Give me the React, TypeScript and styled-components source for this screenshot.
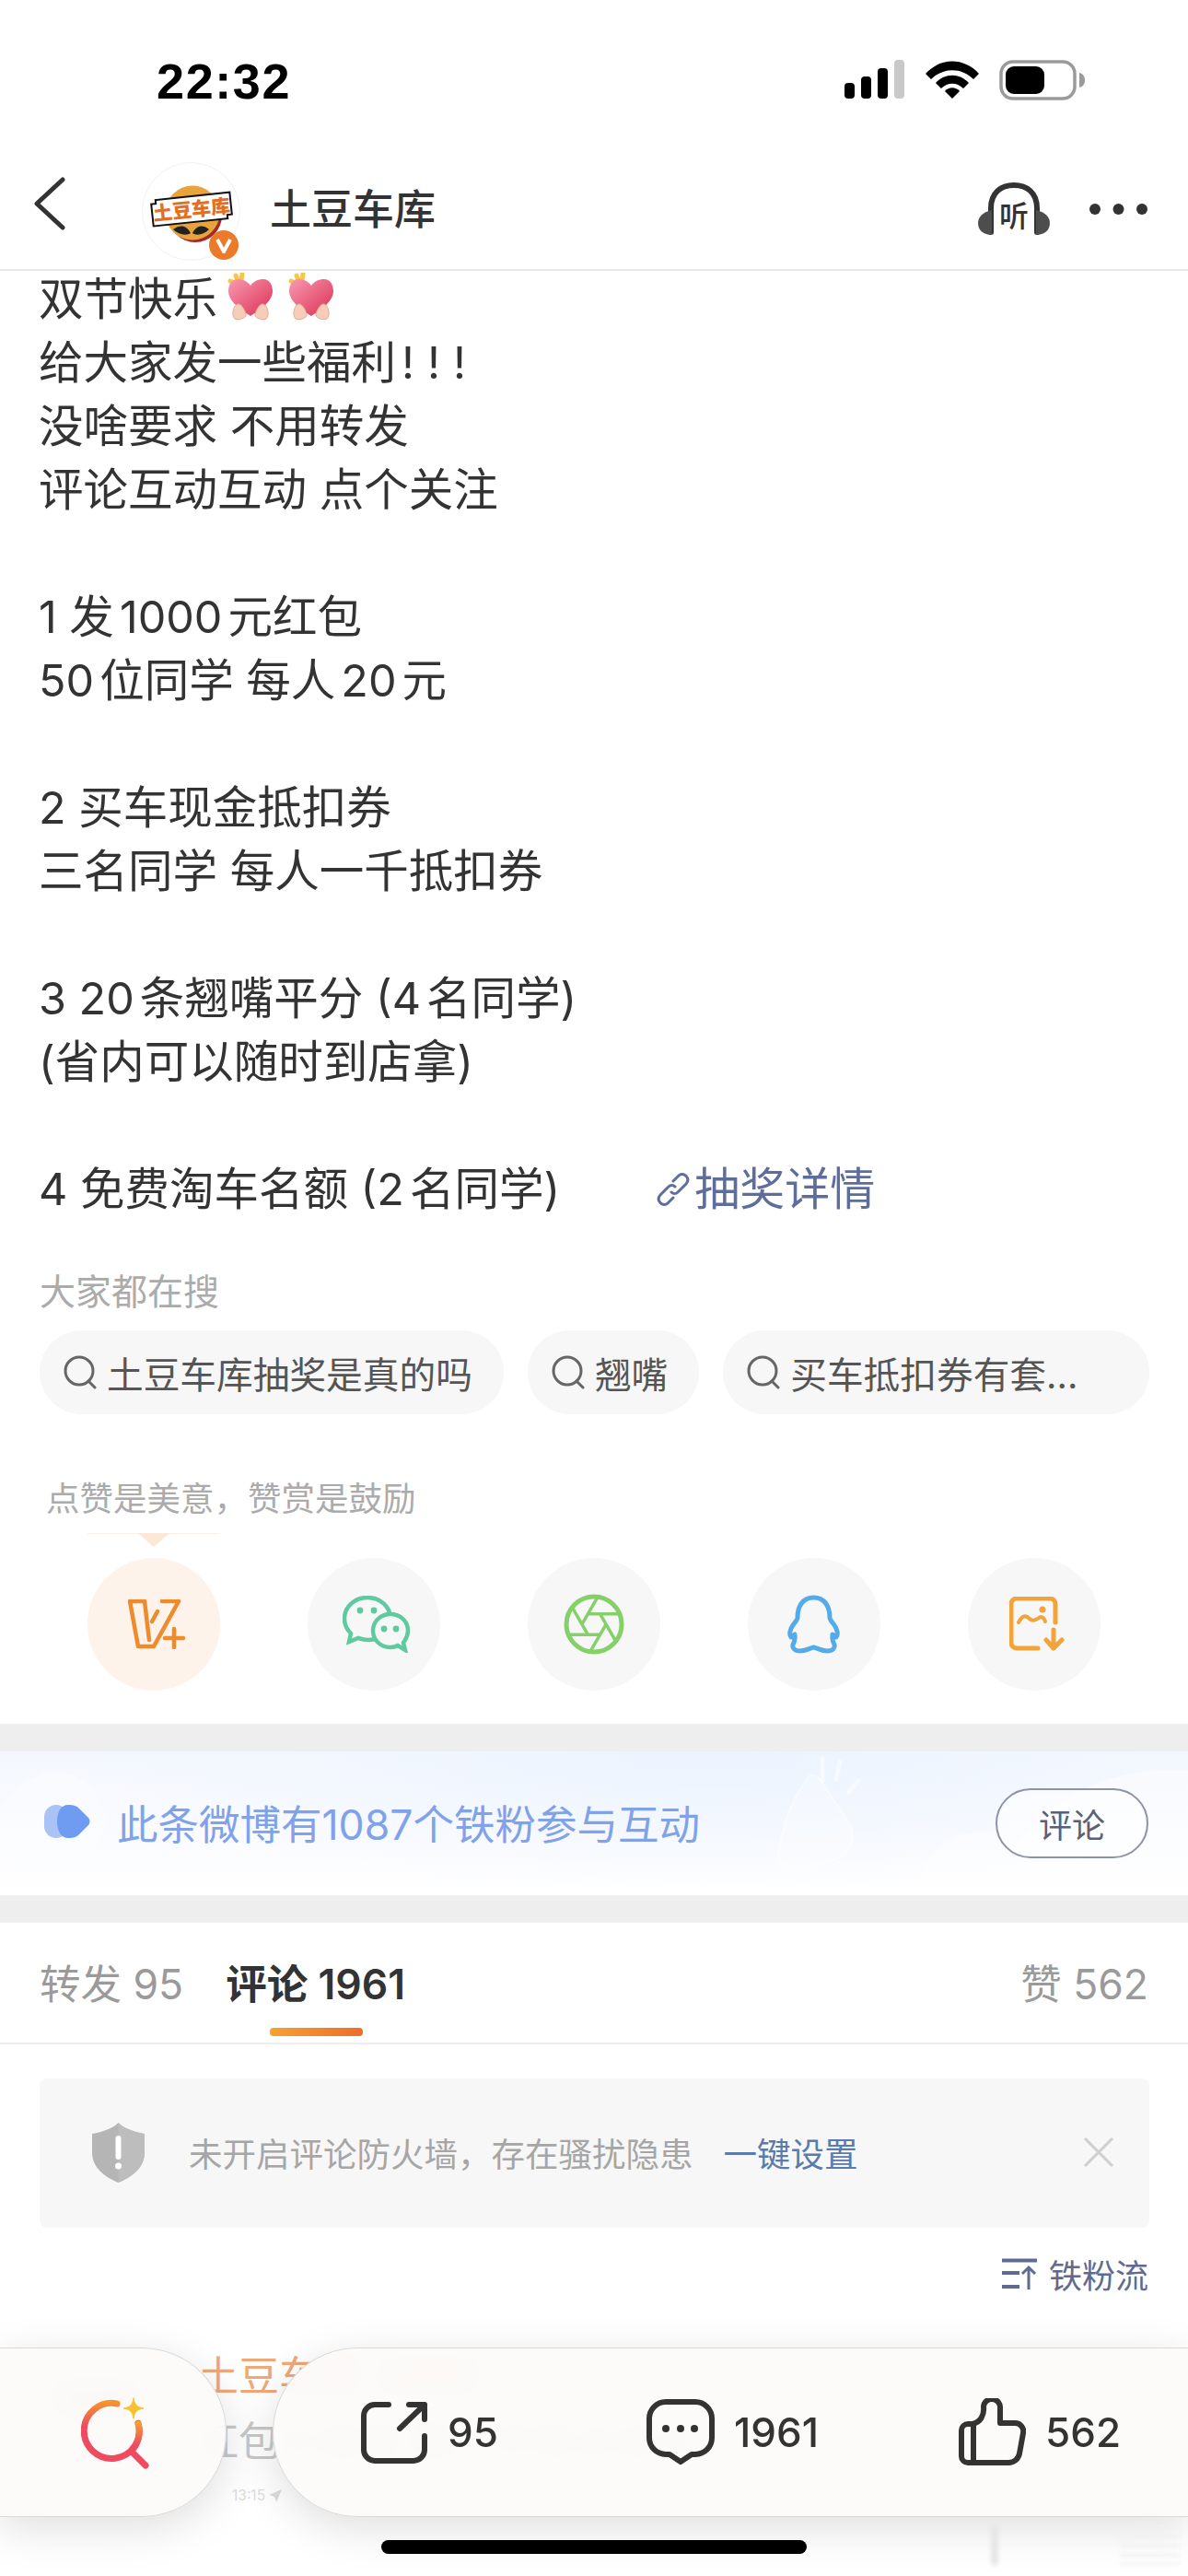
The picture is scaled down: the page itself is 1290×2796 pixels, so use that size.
import React from "react";
import styled, { createGlobalStyle } from "styled-components";

const Global = createGlobalStyle`
  html, body { margin: 0; padding: 0; background: #fff; }
  * { box-sizing: border-box; }
  body { font-family: Inter, "Noto Sans CJK SC", sans-serif; color: #333; text-autospace: normal; }
`;

const Page = styled.div`
  position: relative;
  width: 1290px;
  height: 2796px;
  overflow: hidden;
  background: #fff;
`;
const Header = styled.header`
  position: relative;
  z-index: 2;
  height: 294px;
  border-bottom: 2px solid #e9e9e9;
  background: #fff;
`;
const StatusBar = styled.div`
  height: 150px;
  display: flex;
  align-items: flex-start;
  justify-content: space-between;
  padding: 65px 112px 0 170px;
`;
const Time = styled.div`
  font: 700 54px/46px "Liberation Sans", sans-serif;
  letter-spacing: 1.6px;
  color: #000;
`;
const StatusIcons = styled.div`
  display: flex;
  align-items: flex-start;
  gap: 22px;
`;
const Nav = styled.nav`
  height: 142px;
  display: flex;
  align-items: center;
  padding: 0 44px 0 36px;
`;
const Avatar = styled.div`
  position: relative;
  width: 107px;
  height: 107px;
  margin-left: 82px;
  margin-top: 16px;
  border-radius: 50%;
  border: 1px solid #f1f1f1;
`;
const AvatarBadge = styled.div`
  position: absolute;
  right: 1px;
  bottom: 0;
  width: 32px;
  height: 32px;
  border-radius: 50%;
  background: #ec7a2b;
  color: #fff;
  display: flex;
  align-items: center;
  justify-content: center;
`;
const NavTitle = styled.div`
  margin-left: 32px;
  margin-top: 14px;
  font-size: 45px;
  line-height: 60px;
  font-weight: 500;
  color: #333;
`;
const NavRight = styled.div`
  margin-left: auto;
  margin-top: 11px;
  display: flex;
  align-items: center;
  gap: 43px;
`;

const Post = styled.section`
  margin-top: -4px;
  padding: 0 42px;
`;
const Line = styled.div`
  height: 69px;
  font-size: 48.5px;
  line-height: 69px;
  color: #333;
  white-space: pre;
  display: flex;
  align-items: center;
`;
const Bangs = styled.span`
  letter-spacing: 14px;
  margin-left: 6px;
`;
const Emoji = styled.svg<{ $gap: number }>`
  margin-left: ${(p) => p.$gap}px;
  margin-top: -6px;
`;
const DetailLink = styled.span`
  margin-left: 104px;
  display: inline-flex;
  align-items: center;
  color: #5d6d9c;
  font-size: 49px;
  gap: 4px;
`;

const SearchLabel = styled.div`
  margin: 50px 43px 0;
  height: 54px;
  font-size: 39px;
  line-height: 54px;
  color: #ababab;
`;
const Chips = styled.div`
  margin: 15px 42px 0 43px;
  display: flex;
  gap: 26px;
`;
const Chip = styled.div<{ $grow?: boolean }>`
  height: 91px;
  border-radius: 46px;
  background: #f7f7f7;
  display: flex;
  align-items: center;
  gap: 10px;
  padding: 0 34px 0 25px;
  font-size: 39.7px;
  color: #555;
  white-space: nowrap;
  flex: ${(p) => (p.$grow ? 1 : "none")};
`;

const RewardText = styled.div`
  margin: 67px 0 0 50px;
  height: 50px;
  font-size: 36.5px;
  line-height: 50px;
  color: #ababab;
`;
const TipMark = styled.div`
  position: relative;
  margin: 12px 0 0 95px;
  width: 144px;
  height: 15px;
  border-top: 1px solid #fbf0e6;
  &::after {
    content: "";
    position: absolute;
    left: 55px;
    top: -1px;
    border-left: 17px solid transparent;
    border-right: 17px solid transparent;
    border-top: 15px solid #fce8d6;
  }
`;
const ShareRow = styled.div`
  margin-top: 12px;
  padding: 0 95px 36px;
  display: flex;
  justify-content: space-between;
`;
const ShareCircle = styled.div<{ $active?: boolean; $nudge?: number }>`
  width: 144px;
  height: 144px;
  border-radius: 50%;
  padding-left: ${(p) => p.$nudge ?? 0}px;
  background: ${(p) => (p.$active ? "#fef3ea" : "#f7f7f7")};
  display: flex;
  align-items: center;
  justify-content: center;
`;
const Band = styled.div`
  height: 30px;
  background: #eeeeee;
`;
const Banner = styled.section`
  position: relative;
  height: 156px;
  overflow: hidden;
  display: flex;
  align-items: center;
  padding: 0 43px 4px 48px;
  background: radial-gradient(ellipse 700px 150px at 60% 0%, #ecf3fe 0%, rgba(240, 246, 254, 0.5) 60%, rgba(255, 255, 255, 0) 100%),
    linear-gradient(180deg, #f4f8fe 0%, #fbfcff 70%, #ffffff 100%);
`;
const BannerArt = styled.svg`
  position: absolute;
  left: 0;
  top: 0;
`;
const BannerIconWrap = styled.div`
  position: relative;
  display: flex;
`;
const BannerText = styled.div`
  position: relative;
  margin-left: 29px;
  font-size: 44.5px;
  color: #7fa2ea;
  text-autospace: no-autospace;
`;
const BannerButton = styled.div`
  position: relative;
  margin-left: auto;
  margin-top: 4px;
  width: 166px;
  height: 76px;
  border-radius: 38px;
  border: 2px solid #8d93a8;
  background: rgba(255, 255, 255, 0.5);
  display: flex;
  align-items: center;
  justify-content: center;
  font-size: 36px;
  color: #5a6075;
`;
const Tabs = styled.div`
  position: relative;
  height: 132px;
  padding: 0 43px 0;
  border-bottom: 2px solid #ececec;
  display: flex;
  align-items: flex-start;
  font-size: 44.5px;
  line-height: 60px;
  color: #9a9a9a;
`;
const Tab = styled.div<{ $active?: boolean; $right?: boolean }>`
  margin-top: 37px;
  margin-left: ${(p) => (p.$right ? "auto" : p.$active ? "46px" : "0")};
  font-weight: ${(p) => (p.$active ? 600 : 400)};
  color: ${(p) => (p.$active ? "#333" : "#9a9a9a")};
  position: relative;
`;
const TabMark = styled.div`
  position: absolute;
  left: 48px;
  top: 77px;
  width: 101px;
  height: 9px;
  border-radius: 4px;
  background: linear-gradient(90deg, #f5a233, #ed6d2a);
`;
const Notice = styled.div`
  margin: 37px 42px 0 43px;
  height: 162px;
  background: #f7f7f7;
  border-radius: 8px;
  display: flex;
  align-items: center;
  padding: 0 38px 2px 57px;
  font-size: 36.5px;
  color: #a6a6a6;
`;
const NoticeText = styled.div`
  margin-left: 48px;
`;
const NoticeLink = styled.div`
  margin-left: 33px;
  color: #5b7cab;
`;
const NoticeClose = styled.svg`
  margin-left: auto;
`;
const SortRow = styled.div`
  margin: 25px 43px 0;
  height: 50px;
  display: flex;
  align-items: center;
  justify-content: flex-end;
  gap: 13px;
  font-size: 36px;
  color: #5f6b90;
`;
const Comment = styled.div`
  margin: 56px 0 0 57px;
  display: flex;
  gap: 63px;
`;
const CommentAvatar = styled.div`
  width: 95px;
  height: 36px;
  margin-top: 36px;
  background: #efe2d4;
  flex: none;
`;
const CommentMain = styled.div`
  min-width: 0;
`;
const CommentName = styled.div`
  font-size: 44px;
  line-height: 60px;
  color: #efa878;
  display: flex;
  align-items: center;
  gap: 20px;
`;
const Crown = styled.div`
  width: 108px;
  height: 36px;
  background: #f6e3c8;
  border-radius: 4px;
`;
const CommentBody = styled.div`
  margin-top: 11px;
  font-size: 44px;
  line-height: 60px;
  color: #c8c8c8;
  white-space: nowrap;
`;
const CommentTime = styled.div`
  margin: 19px 0 0 37px;
  font-size: 15.5px;
  color: #dcdcdc;
  display: flex;
  align-items: center;
  gap: 4px;
`;
const BottomBar = styled.div`
  position: absolute;
  left: 0;
  right: 0;
  bottom: 64px;
  height: 184px;
  display: flex;
`;
const Pill = styled.div<{ $side: "left" | "right" }>`
  height: 184px;
  background: rgba(252, 251, 250, 0.92);
  backdrop-filter: blur(12px);
  border: 1.5px solid #d9d9d9;
  box-shadow: 0 12px 48px rgba(0, 0, 0, 0.13);
  display: flex;
  align-items: center;
  ${(p) =>
    p.$side === "left"
      ? `width: 248px; margin-left: -2px; border-radius: 0 92px 92px 0; border-left: 0; padding-left: 90px;`
      : `flex: 1; margin-left: 50px; margin-right: -2px; border-radius: 92px 0 0 92px; border-right: 0; padding-left: 95px;`}
`;
const Action = styled.div<{ $w: number }>`
  width: ${(p) => p.$w}px;
  display: flex;
  align-items: center;
  gap: 21px;
  font-size: 44px;
  font-weight: 500;
  color: #333;
`;
const HomeIndicator = styled.div`
  position: absolute;
  left: 414px;
  bottom: 24px;
  width: 462px;
  height: 15px;
  border-radius: 8px;
  background: #000;
`;
const GhostActions = styled.div`
  position: absolute;
  left: 1076px;
  bottom: 12px;
  width: 205px;
  height: 42px;
  filter: blur(2px);
  background:
    linear-gradient(#e6e6e6, #e6e6e6) left / 8px 100% no-repeat,
    repeating-linear-gradient(180deg, #efefef 0 3px, transparent 3px 10px) right / 65px 100% no-repeat;
`;

const Signal = () => (
  <svg width="66" height="42" viewBox="0 0 66 42">
    <rect x="0" y="25" width="11" height="17" rx="4" fill="#000" />
    <rect x="18" y="18" width="11" height="24" rx="4" fill="#000" />
    <rect x="36" y="9" width="11" height="33" rx="4" fill="#000" />
    <rect x="54" y="0" width="11" height="42" rx="4" fill="#c9c9c9" />
  </svg>
);
const Wifi = () => (
  <svg width="58" height="42" viewBox="0 0 58 42">
    <path d="M0 15C16 -3 42 -3 58 15L52 21C39 8 19 8 6 21Z" fill="#000" />
    <path d="M11 25C21 14 37 14 47 25L41 31C34 24 24 24 17 31Z" fill="#000" />
    <path d="M21 34C25 29 33 29 37 34L29 42Z" fill="#000" />
  </svg>
);
const Battery = () => (
  <svg width="93" height="44" viewBox="0 0 93 44">
    <rect x="2" y="2" width="80" height="40" rx="13" fill="none" stroke="#9a9a9a" strokeWidth="3.5" />
    <rect x="7" y="7" width="42" height="30" rx="9" fill="#000" />
    <path d="M87 14C91 15 93 18 93 22C93 26 91 29 87 30Z" fill="#9a9a9a" />
  </svg>
);
const Back = () => (
  <svg width="36" height="58" viewBox="0 0 36 58">
    <path d="M32 3L4 29L32 55" fill="none" stroke="#333" strokeWidth="5" strokeLinecap="round" strokeLinejoin="round" />
  </svg>
);
const Logo = () => (
  <svg width="105" height="105" viewBox="0 0 105 105">
    <circle cx="57" cy="57" r="29" fill="#a32a2a" />
    <circle cx="54" cy="54" r="29.5" fill="#e8a33a" />
    <g transform="rotate(-6 54 50)">
      <path d="M9 39H14V35H97V61H92V65H9Z" fill="#111" />
      <path d="M11 41H16V37H95V59H90V63H11Z" fill="#fff" />
      <text x="53" y="58" textAnchor="middle" fontSize="21" fontWeight="900" fill="#e26f22" fontFamily="'Noto Sans CJK SC', sans-serif">土豆车库</text>
    </g>
    <path d="M52 76C48 68 41 66 33 72C39 78 48 79 52 76ZM54 76C58 68 65 66 72 72C66 78 58 79 54 76Z" fill="#222" />
  </svg>
);
const Headphones = () => (
  <svg width="78" height="58" viewBox="0 0 78 58">
    <path d="M14 54V28C14 11 25 3 39 3C53 3 64 11 64 28V54" fill="none" stroke="#333" strokeWidth="6" strokeLinecap="round" />
    <path d="M15 30C5 32 0 38 0 44C0 52 6 57 15 57Z" fill="#4d4d4d" />
    <path d="M63 30C73 32 78 38 78 44C78 52 72 57 63 57Z" fill="#4d4d4d" />
    <text x="39" y="48" textAnchor="middle" fontSize="32" fontWeight="500" fill="#333" fontFamily="'Noto Sans CJK SC', sans-serif">听</text>
  </svg>
);
const More = () => (
  <svg width="63" height="12" viewBox="0 0 63 12">
    <circle cx="6" cy="6" r="6" fill="#333" />
    <circle cx="31.5" cy="6" r="6" fill="#333" />
    <circle cx="57" cy="6" r="6" fill="#333" />
  </svg>
);
const Heart = ({ gap }: { gap: number }) => (
  <Emoji $gap={gap} width="50" height="52" viewBox="0 0 50 52">
    <defs>
      <linearGradient id="hg" x1="0" y1="0" x2="1" y2="1">
        <stop offset="0" stopColor="#f89ab2" />
        <stop offset="1" stopColor="#dc2f52" />
      </linearGradient>
    </defs>
    <path d="M3 9L7 11M9 3L11 8M16 1L15.5 6" stroke="#f6c64a" strokeWidth="5" strokeLinecap="round" />
    <path d="M25 14C29 8 35 7 39 7C46 7 49 14 49 20C49 31 35 41 25 47C15 41 1 31 1 20C1 14 4 7 11 7C15 7 21 8 25 14Z" fill="url(#hg)" />
    <path d="M8 50C4 46 6 36 11 34C15 33 20 42 20 46C20 49 13 52 8 50Z" fill="#f6cdb8" stroke="#e8ab97" strokeWidth="1" />
    <path d="M42 50C46 46 44 36 39 34C35 33 30 42 30 46C30 49 37 52 42 50Z" fill="#f6cdb8" stroke="#e8ab97" strokeWidth="1" />
  </Emoji>
);
const ChainLink = () => (
  <svg width="38" height="38" viewBox="0 0 38 38" fill="none" stroke="#5d6d9c" strokeWidth="3" strokeLinecap="round">
    <path d="M19 10L25 4C27 2 31 2 33 4.5C35.5 7 35.5 10 33 13L24 22C22 24 19 24 17 22" />
    <path d="M19 28L13 34C11 36 7 36 5 33.5C2.5 31 2.5 28 5 25L14 16C16 14 19 14 21 16" />
  </svg>
);
const ChipSearch = () => (
  <svg width="38" height="37" viewBox="0 0 38 37">
    <circle cx="18" cy="17" r="15" fill="none" stroke="#666" strokeWidth="3" />
    <path d="M28 28L35 35" stroke="#666" strokeWidth="3" strokeLinecap="round" />
  </svg>
);
const VPlus = () => (
  <svg width="62" height="54" viewBox="0 0 62 54" fill="none" stroke="#ef8a2d" strokeWidth="4.5" strokeLinejoin="round" strokeLinecap="round">
    <path d="M23 44L18 2H2L11 51H28L55 2H37" />
    <path d="M26 24L32 13" />
    <path d="M40 42H60M50 32V52" />
  </svg>
);
const WeChat = () => (
  <svg width="74" height="62" viewBox="0 0 74 62" fill="none" stroke="#5fc9a0" strokeWidth="4.5">
    <path d="M27 2C13 2 2 12 2 25C2 32 5 37 9 41L7 50L17 46C20 47 24 48 28 48C42 48 52 38 52 25C52 12 41 2 27 2Z" />
    <path d="M52 20C41 20 33 28 33 38C33 48 41 56 52 56C55 56 58 55 60 54L68 59L66 51C69 47 71 43 71 38C71 28 63 20 52 20Z" fill="#f7f7f7" />
    <g fill="#5fc9a0" stroke="none">
      <circle cx="19" cy="16" r="3.4" /><circle cx="34" cy="16" r="3.4" />
      <circle cx="45" cy="36" r="3.4" /><circle cx="58" cy="36" r="3.4" />
    </g>
  </svg>
);
const blades = [0, 60, 120, 180, 240, 300];
const Aperture = () => (
  <svg width="66" height="66" viewBox="-33 -33 66 66" fill="none" stroke="#86d06a" strokeWidth="3.5">
    <circle r="30" strokeWidth="5" />
    {blades.map((a) => (
      <path key={a} d="M-6.5 -11.3H28" transform={`rotate(${a})`} />
    ))}
  </svg>
);
const QQ = () => (
  <svg width="58" height="65" viewBox="0 0 58 65" fill="none" stroke="#54abe8" strokeWidth="5" strokeLinejoin="round">
    <path d="M28.5 3C17 3 11 12 11 25C11 27 8 30 6 33C3 37 1.5 43 4 46L8 43C8 47 9 49 6 54C5 58 8 61 14 61C20 61 24 58 28.5 57C33 58 37 61 43 61C49 61 52 58 51 54C48 49 49 47 49 43L53 46C55.5 43 54 37 51 33C49 30 46 27 46 25C46 12 40 3 28.5 3Z" />
  </svg>
);
const SaveImage = () => (
  <svg width="60" height="60" viewBox="0 0 60 60" fill="none" stroke="#f2a33a" strokeWidth="5" strokeLinecap="round" strokeLinejoin="round">
    <path d="M50 28V8A6 6 0 0 0 44 2H8A6 6 0 0 0 2 8V50A6 6 0 0 0 8 56H31" />
    <path d="M10 28C14 20 18 20 22 24C26 28 30 24 34 22C36 22 38 24 39 27" strokeWidth="4" />
    <circle cx="36" cy="14" r="3.5" fill="#f2a33a" stroke="none" />
    <path d="M48 36V56M40 47L48 56L57 47" />
  </svg>
);
const BannerIcon = () => (
  <svg width="50" height="36" viewBox="0 0 50 36">
    <rect x="0" y="0" width="26" height="36" rx="13" fill="#a9c3f5" />
    <path d="M26 0C32 0 35 1 38 4L48 14C50 16 50 20 48 22L38 32C35 35 32 36 26 36C18 36 14 28 14 18C14 8 18 0 26 0Z" fill="#6f9cf0" />
  </svg>
);
const Art = () => (
  <BannerArt width="1290" height="156" viewBox="0 0 1290 156">
    <path d="M845 110C850 80 860 50 878 28C882 24 886 26 890 30L922 78C930 95 925 112 905 118L870 128C855 130 843 125 845 110Z" fill="#fff" fillOpacity="0.28" stroke="#fff" strokeOpacity="0.45" strokeWidth="2" />
    <path d="M893 32V8M908 30L912 12M922 44L932 32" stroke="#fff" strokeOpacity="0.5" strokeWidth="5" strokeLinecap="round" />
    <path d="M0 60C40 10 90 10 110 60C130 90 90 130 0 130Z" fill="#fff" fillOpacity="0.3" />
    <path d="M1010 115C1040 80 1080 80 1100 105C1130 70 1180 15 1290 20V156H990Z" fill="#fff" fillOpacity="0.4" />
  </BannerArt>
);
const Shield = () => (
  <svg width="57" height="65" viewBox="0 0 57 65">
    <path d="M28.5 0C34 6 46 10 57 12V32C57 48 45 58 28.5 65C12 58 0 48 0 32V12C11 10 23 6 28.5 0Z" fill="#b5b5b5" />
    <path d="M28.5 0C34 6 46 10 57 12V32C57 48 45 58 28.5 65Z" fill="#bdbdbd" />
    <path d="M28.5 17V37" stroke="#fff" strokeWidth="6" strokeLinecap="round" />
    <circle cx="28.5" cy="47" r="3.5" fill="#fff" />
  </svg>
);
const Close = () => (
  <NoticeClose width="34" height="34" viewBox="0 0 34 34">
    <path d="M2 2L32 32M32 2L2 32" stroke="#cfcfcf" strokeWidth="3" />
  </NoticeClose>
);
const Sort = () => (
  <svg width="38" height="34" viewBox="0 0 38 34" stroke="#5f6b90" fill="none">
    <path d="M0 2.5H38M0 16H19M0 31H19" strokeWidth="4" />
    <path d="M29 34V11M22 17L29 10L36 17" strokeWidth="3" />
  </svg>
);
const TimeArrow = () => (
  <svg width="14" height="14" viewBox="0 0 14 14">
    <path d="M14 0L0 6L6 8L8 14Z" fill="#dcdcdc" />
  </svg>
);
const SearchAI = () => (
  <svg width="76" height="80" viewBox="0 0 76 80" fill="none" strokeLinecap="round" strokeWidth="7">
    <defs>
      <linearGradient id="sa" x1="0" y1="8" x2="0" y2="34" gradientUnits="userSpaceOnUse">
        <stop offset="0" stopColor="#f5932c" />
        <stop offset="1" stopColor="#ee4a60" />
      </linearGradient>
      <linearGradient id="sb" x1="0" y1="28" x2="0" y2="54" gradientUnits="userSpaceOnUse">
        <stop offset="0" stopColor="#f5a62c" />
        <stop offset="1" stopColor="#ee4a60" />
      </linearGradient>
    </defs>
    <path d="M39 9A30 30 0 1 0 62 30" stroke="url(#sa)" />
    <path d="M62 31A30 30 0 0 1 54 61" stroke="url(#sb)" />
    <path d="M55 61L70 76" stroke="#ee4a60" />
    <path d="M57 3C58 10 61 13 68 14C61 15 58 18 57 25C56 18 53 15 46 14C53 13 56 10 57 3Z" fill="#f8c12f" stroke="#f8c12f" strokeWidth="1" />
  </svg>
);
const Share = () => (
  <svg width="73" height="67" viewBox="0 0 73 67" fill="none" stroke="#333" strokeWidth="6" strokeLinecap="round" strokeLinejoin="round">
    <path d="M30 3H15A12 12 0 0 0 3 15V52A12 12 0 0 0 15 64H57A12 12 0 0 0 69 52V37" />
    <path d="M42 29L69 3M52 3H69V19" />
  </svg>
);
const CommentIcon = () => (
  <svg width="74" height="72" viewBox="0 0 74 72" fill="none" stroke="#333" strokeWidth="6" strokeLinejoin="round">
    <path d="M21 3H53A18 18 0 0 1 71 21V42A18 18 0 0 1 53 60H49L37 68L25 60H21A18 18 0 0 1 3 42V21A18 18 0 0 1 21 3Z" />
    <g fill="#333" stroke="none">
      <circle cx="21" cy="32" r="4" /><circle cx="37" cy="32" r="4" /><circle cx="52" cy="32" r="4" />
    </g>
  </svg>
);
const Thumb = () => (
  <svg width="73" height="74" viewBox="0 0 73 74" fill="none" stroke="#333" strokeWidth="6" strokeLinejoin="round">
    <path d="M15 28H10A7 7 0 0 0 3 35V63A7 7 0 0 0 10 70H54A12 12 0 0 0 66 60L70 38A9 9 0 0 0 61 27H45V11A9 9 0 0 0 27 9C28 18 24 26 15 28Z" />
    <path d="M16 28V70" />
  </svg>
);

export default function App() {
  return (
    <Page>
      <Global />
      <Header>
        <StatusBar>
          <Time>22:32</Time>
          <StatusIcons>
            <Signal />
            <Wifi />
            <Battery />
          </StatusIcons>
        </StatusBar>
        <Nav>
          <Back />
          <Avatar>
            <Logo />
            <AvatarBadge>
              <svg width="18" height="18" viewBox="0 0 18 18"><path d="M2 3L9 16L16 3" fill="none" stroke="#fff" strokeWidth="4" /></svg>
            </AvatarBadge>
          </Avatar>
          <NavTitle>土豆车库</NavTitle>
          <NavRight>
            <Headphones />
            <More />
          </NavRight>
        </Nav>
      </Header>
      <Post>
        <Line>双节快乐<Heart gap={11} /><Heart gap={16} /></Line>
        <Line>给大家发一些福利<Bangs>!!!</Bangs></Line>
        <Line>没啥要求 不用转发</Line>
        <Line>评论互动互动 点个关注</Line>
        <Line />
        <Line>1 发1000元红包</Line>
        <Line>50位同学 每人20元</Line>
        <Line />
        <Line>2 买车现金抵扣券</Line>
        <Line>三名同学 每人一千抵扣券</Line>
        <Line />
        <Line>3 20条翘嘴平分 (4名同学)</Line>
        <Line>(省内可以随时到店拿)</Line>
        <Line />
        <Line>
          4 免费淘车名额 (2名同学)
          <DetailLink>
            <ChainLink />
            抽奖详情
          </DetailLink>
        </Line>
      </Post>
      <SearchLabel>大家都在搜</SearchLabel>
      <Chips>
        <Chip><ChipSearch />土豆车库抽奖是真的吗</Chip>
        <Chip><ChipSearch />翘嘴</Chip>
        <Chip $grow><ChipSearch />买车抵扣券有套...</Chip>
      </Chips>
      <RewardText>点赞是美意，赞赏是鼓励</RewardText>
      <TipMark />
      <ShareRow>
        <ShareCircle $active $nudge={6}><VPlus /></ShareCircle>
        <ShareCircle $nudge={6}><WeChat /></ShareCircle>
        <ShareCircle><Aperture /></ShareCircle>
        <ShareCircle><QQ /></ShareCircle>
        <ShareCircle $nudge={6}><SaveImage /></ShareCircle>
      </ShareRow>
      <Band />
      <Banner>
        <Art />
        <BannerIconWrap><BannerIcon /></BannerIconWrap>
        <BannerText>此条微博有1087个铁粉参与互动</BannerText>
        <BannerButton>评论</BannerButton>
      </Banner>
      <Band />
      <Tabs>
        <Tab>转发 95</Tab>
        <Tab $active>评论 1961<TabMark /></Tab>
        <Tab $right>赞 562</Tab>
      </Tabs>
      <Notice>
        <Shield />
        <NoticeText>未开启评论防火墙，存在骚扰隐患</NoticeText>
        <NoticeLink>一键设置</NoticeLink>
        <Close />
      </Notice>
      <SortRow><Sort />铁粉流</SortRow>
      <Comment>
        <CommentAvatar />
        <CommentMain>
          <CommentName>土豆车库<Crown /></CommentName>
          <CommentBody>红包已发放 晚上开奖点击与</CommentBody>
          <CommentTime>13:15<TimeArrow /></CommentTime>
        </CommentMain>
      </Comment>
      <BottomBar>
        <Pill $side="left"><SearchAI /></Pill>
        <Pill $side="right">
          <Action $w={310}><Share />95</Action>
          <Action $w={339}><CommentIcon />1961</Action>
          <Action $w={200}><Thumb />562</Action>
        </Pill>
      </BottomBar>
      <GhostActions />
      <HomeIndicator />
    </Page>
  );
}
